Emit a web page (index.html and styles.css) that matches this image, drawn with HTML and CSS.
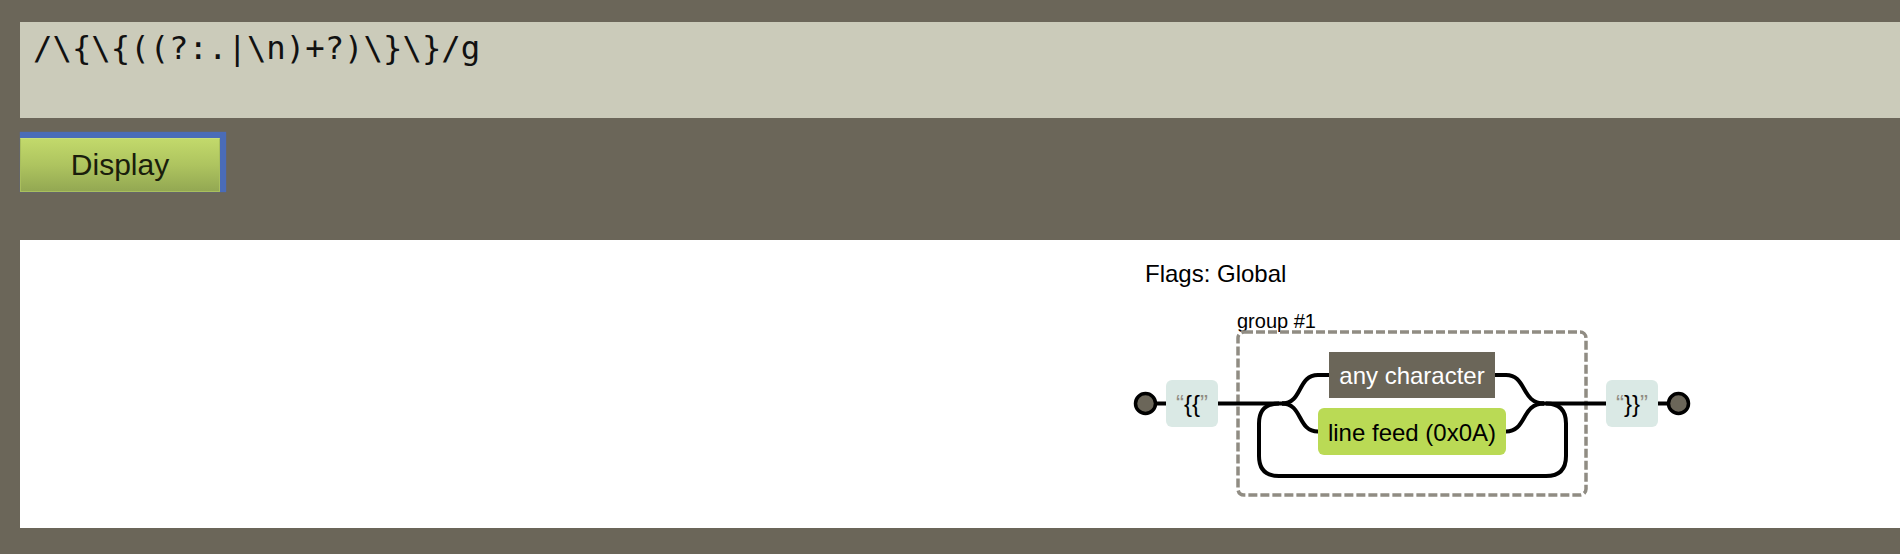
FILE: index.html
```html
<!DOCTYPE html>
<html>
<head>
<meta charset="utf-8">
<title>Regexper</title>
<link rel="stylesheet" href="styles.css">
</head>
<body>
<div class="page">
  <textarea class="regex-input" spellcheck="false">/\{\{((?:.|\n)+?)\}\}/g</textarea>
  <div class="controls">
    <button class="display-btn" type="button">Display</button>
  </div>
  <div class="results">
    <svg class="diagram" width="1880" height="288" viewBox="0 0 1880 288" xmlns="http://www.w3.org/2000/svg">
      <text class="flags" x="1125" y="42">Flags: Global</text>

      <text class="group-label" x="1217" y="88">group #1</text>
      <rect class="group-box" x="1218" y="92" width="348" height="163" rx="6" ry="6"/>

      <circle class="terminal" cx="1125.5" cy="163.5" r="10"/>
      <circle class="terminal" cx="1658.5" cy="163.5" r="10"/>

      <path class="wire" d="M1135.5,163.5 H1146"/>
      <path class="wire" d="M1198,163.5 H1266"/>
      <path class="wire" d="M1520,163.5 H1586"/>
      <path class="wire" d="M1638,163.5 H1648.5"/>

      <path class="wire" d="M1262,163.5 C1283,163.5 1277,135 1298,135 H1309"/>
      <path class="wire" d="M1262,163.5 C1283,163.5 1277,191.5 1298,191.5"/>
      <path class="wire" d="M1475,135 H1486 C1507,135 1501,163.5 1524,163.5"/>
      <path class="wire" d="M1486,191.5 C1507,191.5 1501,163.5 1524,163.5"/>

      <path class="wire" d="M1259,163.5 q-20,0 -20,20 V216 q0,20 20,20 H1526 q20,0 20,-20 V183.5 q0,-20 -20,-20"/>

      <rect class="literal-box" x="1146" y="140" width="52" height="47" rx="6" ry="6"/>
      <text class="node-text" x="1172" y="172" text-anchor="middle"><tspan class="quote">“</tspan>{{<tspan class="quote">”</tspan></text>

      <rect class="literal-box" x="1586" y="140" width="52" height="47" rx="6" ry="6"/>
      <text class="node-text" x="1612" y="172" text-anchor="middle"><tspan class="quote">“</tspan>}}<tspan class="quote">”</tspan></text>

      <rect class="any-box" x="1309" y="112" width="166" height="46"/>
      <text class="node-text any-text" x="1392" y="143.5" text-anchor="middle">any character</text>

      <rect class="escape-box" x="1298" y="168" width="188" height="47" rx="6" ry="6"/>
      <text class="node-text" x="1392" y="201" text-anchor="middle">line feed (0x0A)</text>
    </svg>
  </div>
</div>
</body>
</html>
```

FILE: styles.css
```css
html, body {
  margin: 0;
  padding: 0;
}

body {
  background: #6b6659;
  overflow: hidden;
  width: 1900px;
  height: 554px;
  font-family: "Liberation Sans", Arial, sans-serif;
}

.page {
  padding: 22px 0 0 20px;
  display: flex;
  flex-direction: column;
}

.regex-input {
  display: block;
  box-sizing: border-box;
  width: 100%;
  height: 96px;
  margin: 0;
  padding: 7px 13px;
  border: 0;
  outline: none;
  resize: none;
  overflow: hidden;
  background: #cbcbba;
  color: #111;
  font-family: "DejaVu Sans Mono", "Liberation Mono", monospace;
  font-size: 32.3px;
  line-height: 39px;
}

.controls {
  display: flex;
  margin-top: 20px;
  height: 54px;
}

.display-btn {
  box-sizing: border-box;
  width: 200px;
  height: 54px;
  margin: 0;
  padding: 0;
  border: 1px solid #a9bf5e;
  border-top-color: #c9de7a;
  background: linear-gradient(to bottom, #c2d96b 0%, #aec45f 50%, #93a852 100%);
  color: #1a1e0c;
  font-family: "Liberation Sans", Arial, sans-serif;
  font-size: 30px;
  line-height: 52px;
  box-shadow: 3px -3px 1px 3px #4a6cb8;
}

.results {
  margin-top: 48px;
  height: 288px;
  background: #ffffff;
  display: flex;
}

.diagram {
  display: block;
  flex: none;
}

.flags {
  font-family: "Liberation Sans", Arial, sans-serif;
  font-size: 24px;
  fill: #000;
}

.group-label {
  font-family: "Liberation Sans", Arial, sans-serif;
  font-size: 20px;
  fill: #000;
}

.group-box {
  fill: none;
  stroke: #908c83;
  stroke-width: 3.5px;
  stroke-dasharray: 9 3;
}

.terminal {
  fill: #6b6659;
  stroke: #000;
  stroke-width: 3.5px;
}

.wire {
  fill: none;
  stroke: #000;
  stroke-width: 4px;
}

.literal-box {
  fill: #dae9e5;
}

.any-box {
  fill: #6b6659;
}

.escape-box {
  fill: #bada55;
}

.node-text {
  font-family: "Liberation Sans", Arial, sans-serif;
  font-size: 24px;
  fill: #000;
}

.any-text {
  fill: #fff;
}

.quote {
  fill: #908c83;
}
```
